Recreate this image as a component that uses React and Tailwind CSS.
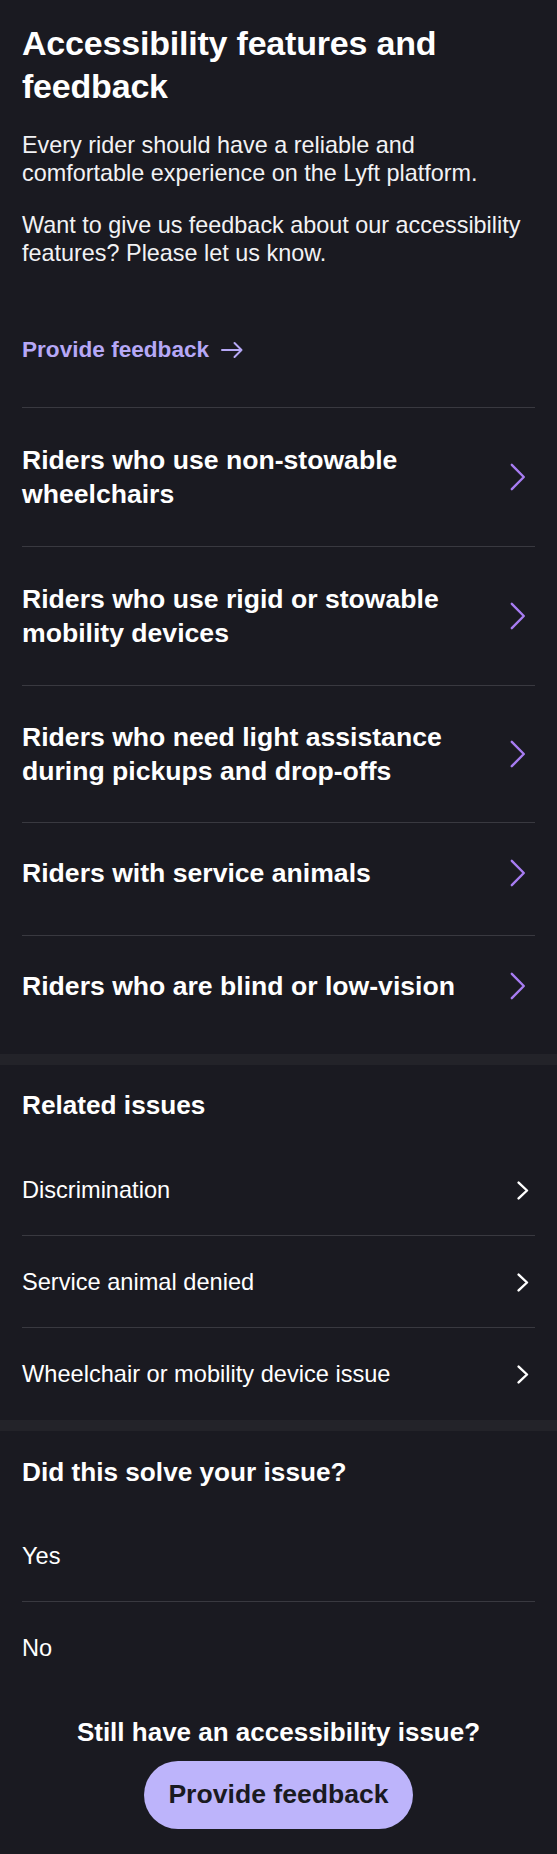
import React from "react";

const FONT = { fontFamily: '"Liberation Sans", Arial, sans-serif' };

function PurpleChevron() {
  return (
    <svg width="16" height="28" viewBox="0 0 16 28" className="shrink-0 mr-[9px]" fill="none">
      <path d="M1.8 1.8 L13.8 14 L1.8 26.2" stroke="#a77cf2" strokeWidth="2.4" strokeLinecap="round" strokeLinejoin="round" />
    </svg>
  );
}

function WhiteChevron() {
  return (
    <svg width="12" height="19" viewBox="0 0 12 19" className="shrink-0 mr-[6px]" fill="none">
      <path d="M1.6 1.6 L10 9.5 L1.6 17.4" stroke="#ffffff" strokeWidth="2.4" strokeLinecap="round" strokeLinejoin="round" />
    </svg>
  );
}

function Divider() {
  return <div className="h-px bg-[#393940]" />;
}

function Band() {
  return <div className="h-[11px] bg-[#232329]" />;
}

const features = [
  { text: ["Riders who use non-stowable", "wheelchairs"], cls: "pt-[35px] pb-[35px]" },
  { text: ["Riders who use rigid or stowable", "mobility devices"], cls: "pt-[35px] pb-[35px]" },
  { text: ["Riders who need light assistance", "during pickups and drop-offs"], cls: "pt-[34px] pb-[34px]" },
  { text: ["Riders with service animals"], cls: "pt-[33px] pb-[45px]" },
  { text: ["Riders who are blind or low-vision"], cls: "pt-[33px] pb-[51px]" },
];

const related = ["Discrimination", "Service animal denied", "Wheelchair or mobility device issue"];

export default function App() {
  return (
    <div className="bg-[#1a1a21] text-white w-full min-h-[1854px]" style={FONT}>
      {/* Header section */}
      <div className="px-[22px] pt-[22px]">
        <h1 className="text-[34px] leading-[43px] font-bold tracking-[-0.2px]">
          Accessibility features and
          <br />
          feedback
        </h1>
        <p className="mt-[23px] text-[23.4px] leading-[28px] text-[#f2f2f4]">
          Every rider should have a reliable and
          <br />
          comfortable experience on the Lyft platform.
        </p>
        <p className="mt-[24px] text-[23.4px] leading-[28px] text-[#f2f2f4]">
          Want to give us feedback about our accessibility
          <br />
          features? Please let us know.
        </p>
        <div className="mt-[69px] flex items-center gap-[12px] text-[#b6a8f6]">
          <span className="text-[22.6px] leading-[28px] font-bold">Provide feedback</span>
          <svg width="22" height="18" viewBox="0 0 22 18" fill="none">
            <path d="M1 9 H20.5 M13.5 2 L20.5 9 L13.5 16" stroke="#b6a8f6" strokeWidth="2" strokeLinecap="round" strokeLinejoin="round" />
          </svg>
        </div>
        <div className="mt-[43px]">
          {features.map((f, i) => (
            <div key={i}>
              <Divider />
              <div className={"flex items-center justify-between " + f.cls}>
                <div className="text-[26.6px] leading-[34px] font-bold">
                  {f.text.map((t, j) => (
                    <div key={j}>{t}</div>
                  ))}
                </div>
                <PurpleChevron />
              </div>
            </div>
          ))}
        </div>
      </div>

      <Band />

      {/* Related issues */}
      <div className="px-[22px] pt-[23px]">
        <h2 className="text-[26.2px] leading-[34px] font-bold">Related issues</h2>
        <div className="mt-[22px]">
          {related.map((r, i) => (
            <div key={i}>
              {i > 0 && <Divider />}
              <div className={"flex items-center justify-between pt-[32px] " + (i === 2 ? "pb-[32px]" : "pb-[31px]")}>
                <span className="text-[23.6px] leading-[28px]">{r}</span>
                <WhiteChevron />
              </div>
            </div>
          ))}
        </div>
      </div>

      <Band />

      {/* Did this solve */}
      <div className="px-[22px] pt-[24px]">
        <h2 className="text-[26.2px] leading-[34px] font-bold">Did this solve your issue?</h2>
        <div className="mt-[21px]">
          <div className="pt-[32px] pb-[31px] text-[23.6px] leading-[28px]">Yes</div>
          <Divider />
          <div className="pt-[32px] pb-[31px] text-[23.6px] leading-[28px]">No</div>
        </div>
        <div className="mt-[22px] flex flex-col items-center pb-[22px]">
          <div className="text-[26px] leading-[34px] font-bold text-center">
            Still have an accessibility issue?
          </div>
          <button
            className="mt-[12px] h-[68px] px-[24px] rounded-full bg-[#bdb4fb] text-[#1a1a21] text-[26.6px] font-bold"
            style={FONT}
          >
            Provide feedback
          </button>
        </div>
      </div>
    </div>
  );
}
